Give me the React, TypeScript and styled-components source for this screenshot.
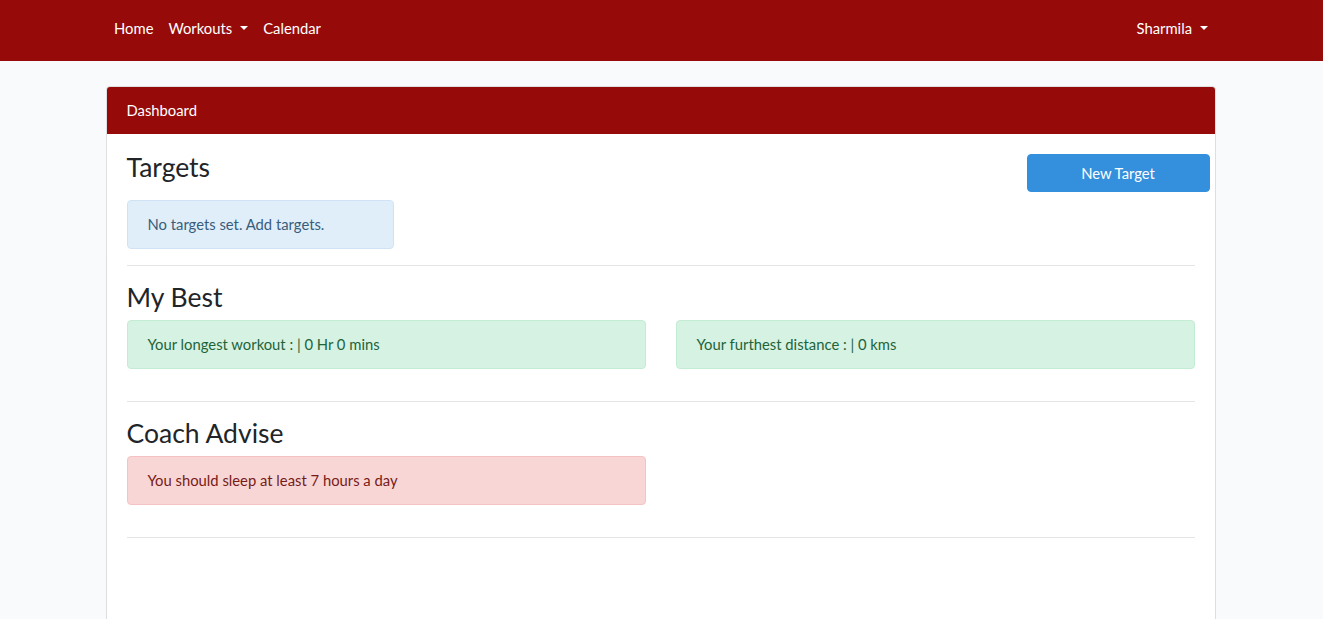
import React from "react";
import styled, { createGlobalStyle } from "styled-components";

const Global = createGlobalStyle`
  * { box-sizing: border-box; }
  body {
    margin: 0;
    background: #f8fafc;
    font-family: "Lato", "Noto Sans", sans-serif;
    font-size: 14.8px;
    line-height: 1.6;
    color: #212529;
  }
`;

const Navbar = styled.nav`
  height: 61px;
  background: #960b09;
  padding-top: 8px;
`;

const Container = styled.div`
  width: 1140px;
  margin-left: calc(50% - 571px);
  padding: 0 15px;
`;

const NavInner = styled(Container)`
  display: flex;
  justify-content: space-between;
  align-items: flex-start;
  padding-left: 16px;
`;

const NavList = styled.div`
  display: flex;
`;

const NavLink = styled.a`
  display: flex;
  align-items: center;
  color: #fff;
  text-decoration: none;
  padding: 8.5px 7.5px;
  line-height: 23px;
`;

const Caret = styled.span`
  display: inline-block;
  margin-left: 8px;
  width: 0;
  height: 0;
  border-top: 4.5px solid #fff;
  border-left: 4.5px solid transparent;
  border-right: 4.5px solid transparent;
`;

const Main = styled.main`
  padding-top: 25px;
`;

const Card = styled.div`
  background: #fff;
  border: 1px solid rgba(0, 0, 0, 0.125);
  border-bottom: 0;
  border-radius: 4px 4px 0 0;
  min-height: 533px;
  overflow: hidden;
`;

const CardHeader = styled.div`
  background: #960b09;
  color: #fff;
  padding: 12px 20px 13px;
  line-height: 22px;
`;

const CardBody = styled.div`
  padding: 18px 20px 0;
`;

const HeadRow = styled.div`
  display: flex;
  justify-content: space-between;
  align-items: flex-start;
  margin-bottom: 8px;
`;

const Heading = styled.h3`
  margin: 0 0 8px;
  font-size: 26.5px;
  font-weight: 400;
  line-height: 30px;
  color: #212529;
`;

const Button = styled.button`
  margin-top: 2px;
  margin-right: -15px;
  width: 183px;
  height: 38px;
  background: #3490dc;
  color: #fff;
  border: 1px solid #3490dc;
  border-radius: 4px;
  font-family: inherit;
  font-size: 14.8px;
`;

type Variant = "info" | "success" | "danger";
const palette: Record<Variant, [string, string, string]> = {
  info: ["#e0eefa", "#cfe3f5", "#385d7a"],
  success: ["#d6f2e2", "#c3ecd5", "#1d643b"],
  danger: ["#f8d6d6", "#f5c3c3", "#761b18"],
};

const Alert = styled.div<{ $v: Variant; $w?: string }>`
  width: ${(p) => p.$w || "auto"};
  background: ${(p) => palette[p.$v][0]};
  border: 1px solid ${(p) => palette[p.$v][1]};
  color: ${(p) => palette[p.$v][2]};
  border-radius: 4px;
  padding: 12px 20px;
  line-height: 23px;
  margin-bottom: 16px;
`;

const Row = styled.div`
  display: grid;
  grid-template-columns: 1fr 1fr;
  column-gap: 30px;
  margin-bottom: 16px;
`;

const Half = styled.div``;

const Rule = styled.hr`
  border: 0;
  border-top: 1px solid rgba(0, 0, 0, 0.1);
  margin: 0 0 16px;
`;

export default function App() {
  return (
    <>
      <Global />
      <Navbar>
        <NavInner>
          <NavList>
            <NavLink href="#">Home</NavLink>
            <NavLink href="#">
              Workouts <Caret />
            </NavLink>
            <NavLink href="#">Calendar</NavLink>
          </NavList>
          <NavList>
            <NavLink href="#">
              Sharmila <Caret />
            </NavLink>
          </NavList>
        </NavInner>
      </Navbar>
      <Main>
        <Container>
          <Card>
            <CardHeader>Dashboard</CardHeader>
            <CardBody>
              <HeadRow>
                <Heading>Targets</Heading>
                <Button>New Target</Button>
              </HeadRow>
              <Alert $v="info" $w="267px">
                No targets set. Add targets.
              </Alert>
              <Rule />
              <Heading>My Best</Heading>
              <Row>
                <Half>
                  <Alert $v="success">Your longest workout : | 0 Hr 0 mins</Alert>
                </Half>
                <Half>
                  <Alert $v="success">Your furthest distance : | 0 kms</Alert>
                </Half>
              </Row>
              <Rule />
              <Heading>Coach Advise</Heading>
              <Row>
                <Half>
                  <Alert $v="danger">You should sleep at least 7 hours a day</Alert>
                </Half>
              </Row>
              <Rule />
            </CardBody>
          </Card>
        </Container>
      </Main>
    </>
  );
}
